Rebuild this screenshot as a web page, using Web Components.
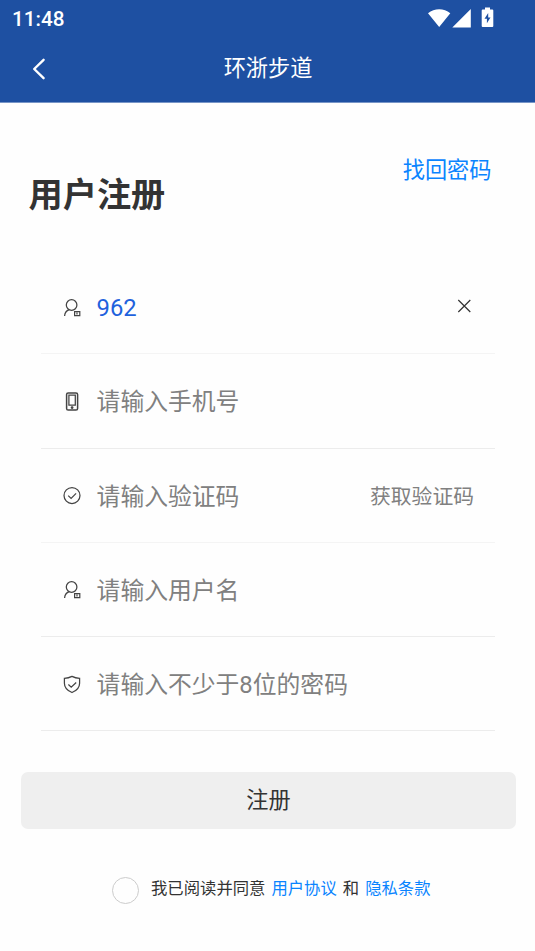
<!DOCTYPE html>
<html lang="zh-CN">
<head>
<meta charset="utf-8">
<title>环浙步道</title>
<style>
body { margin: 0; background: #fefefe; font-family: Roboto, "Noto Sans CJK SC", sans-serif; color: #333; }
</style>
</head>
<body>
<register-page></register-page>
<script>
const ICONS = {
  user: '<circle cx="9.6" cy="7" r="5.3"/><path d="M2.6 18C2.8 14.8 4.5 12.7 7.2 11.7"/><path d="M12.6 13.7h5.2v4h-5.2zM15 14.6v2" stroke-width="1.2"/>',
  phone: '<rect x="4.6" y="1" width="11" height="17" rx="1.6" stroke-width="1.5"/><path d="M6.9 3.2h6.4v9.8H6.9z"/><circle cx="10.1" cy="15.6" r=".8" fill="currentColor"/>',
  check: '<circle cx="10" cy="9.5" r="8"/><path d="M6.2 9.6l2.9 2.8 5-5"/>',
  shield: '<path d="M10 1.4C7.6 2.7 5 3.3 2.4 3.4v4.8c0 4.4 3.2 7.5 7.6 9.3 4.4-1.8 7.6-4.9 7.6-9.3V3.4C15 3.3 12.4 2.7 10 1.4zM6.4 9.5l2.8 2.6 5-4.6"/>'
};
function define(name, html) {
  const template = document.createElement('template');
  template.innerHTML = html;
  customElements.define(name, class extends HTMLElement {
    constructor() {
      super();
      this.attachShadow({ mode: 'open' }).append(template.content.cloneNode(true));
    }
    connectedCallback() {
      const glyph = this.shadowRoot.querySelector('[data-glyph]');
      if (glyph) glyph.innerHTML = ICONS[this.getAttribute('icon')];
    }
  });
}

define('status-bar', `
<style>
:host { display: flex; height: 36px; box-sizing: border-box; padding: 0 40px 0 12px; align-items: center; justify-content: space-between; color: #fff; font-weight: 500; font-size: 20.7px; line-height: 36px; }
span { padding-top: 2px; }
svg { display: block; }
</style>
<span>11:48</span>
<svg width="68" height="24" viewBox="427 6 68 24" fill="#fff">
  <path d="M428 13.2C434.5 7.8 443.9 7.8 450.3 13.2L439.2 27zM470.8 9v18.5h-18.5z"/>
  <path fill-rule="evenodd" d="M485 7.5h5v2h2.3a1 1 0 0 1 1 1v15.4a1 1 0 0 1-1 1h-9.6a1 1 0 0 1-1-1V10.5a1 1 0 0 1 1-1H485zM488.2 13l-3.7 5.8h2.4v4.4l3.6-5.8h-2.3z"/>
</svg>`);

define('nav-bar', `
<style>
:host { display: grid; grid-template-columns: 77px 1fr 76px; height: 66px; align-items: center; justify-items: center; color: #fff; }
h1 { margin: 0; font-size: 22.2px; line-height: 32px; font-weight: 400; padding-bottom: 2px; }
svg { display: block; margin-bottom: 1px; }
</style>
<svg width="16" height="24" viewBox="0 0 16 24" fill="none" stroke="#fff" stroke-width="2.4" stroke-linecap="round" stroke-linejoin="round"><path d="M12.6 2.8L3.2 12l9.4 9.2"/></svg>
<h1><slot></slot></h1>`);

define('form-field', `
<style>
:host { display: flex; height: 94.25px; box-sizing: border-box; align-items: center; padding: 2px 21px 0; border-bottom: 1px solid #ececec; font-size: 23.8px; line-height: 36px; color: #808080; }
:host([soft]) { border-bottom-color: #f4f4f4; }
svg { display: block; flex: none; margin-right: 14.6px; color: #444; }
div { flex: 1; padding-top: 1px; }
</style>
<svg data-glyph width="20" height="20" viewBox="0 0 20 20" fill="none" stroke="currentColor" stroke-width="1.25"></svg>
<div><slot></slot></div>
<slot name="action"></slot>`);

define('clear-button', `
<style>:host { display: block; margin: 0 3px 3px 0; } svg { display: block; }</style>
<svg width="14" height="14" viewBox="0 0 14 14" stroke="#333" stroke-width="1.2"><path d="M1.3 1l12 12M13.3 1l-12 12"/></svg>`);

define('submit-button', `
<style>:host { display: block; height: 57px; box-sizing: border-box; padding-top: 1px; border-radius: 7px; background: #efefef; text-align: center; font-size: 22.2px; line-height: 54px; color: #333; }</style>
<slot></slot>`);

define('agreement-line', `
<style>
:host { display: flex; align-items: center; font-size: 16.35px; line-height: 26px; }
i { width: 25px; height: 25px; border: 1px solid #ccc; border-radius: 50%; margin-right: 12px; }
p { margin: 0; padding-bottom: 2px; display: flex; gap: 6px; }
a { color: #0a84ff; }
</style>
<i></i><p><span>我已阅读并同意</span><a>用户协议</a><span>和</span><a>隐私条款</a></p>`);

define('register-page', `
<style>
:host { display: block; height: 951px; overflow: hidden; }
header { background: #1e50a2; height: 102px; border-bottom: 1px solid #7795c7; }
.head { display: flex; justify-content: space-between; align-items: flex-start; height: 157px; box-sizing: border-box; padding: 50px 43.5px 0 28.5px; }
h2 { margin: 18px 0 0; font-size: 34.2px; line-height: 48px; font-weight: 700; color: #333; }
.head a { color: #0a84ff; font-size: 22.2px; line-height: 34px; }
form { margin: 0 40px 0 41px; }
.value { color: #1f62dd; }
.code { font-size: 20.8px; padding-top: 2px; }
submit-button { margin: 41px 19px 0 21px; }
agreement-line { margin: 47px 0 0 112px; }
</style>
<header><status-bar></status-bar><nav-bar>环浙步道</nav-bar></header>
<section class="head"><h2>用户注册</h2><a>找回密码</a></section>
<form>
<form-field icon="user" soft><span class="value">962</span><clear-button slot="action"></clear-button></form-field>
<form-field icon="phone">请输入手机号</form-field>
<form-field icon="check" soft>请输入验证码<span class="code" slot="action">获取验证码</span></form-field>
<form-field icon="user">请输入用户名</form-field>
<form-field icon="shield">请输入不少于8位的密码</form-field>
</form>
<submit-button>注册</submit-button>
<agreement-line></agreement-line>`);
</script>
</body>
</html>
